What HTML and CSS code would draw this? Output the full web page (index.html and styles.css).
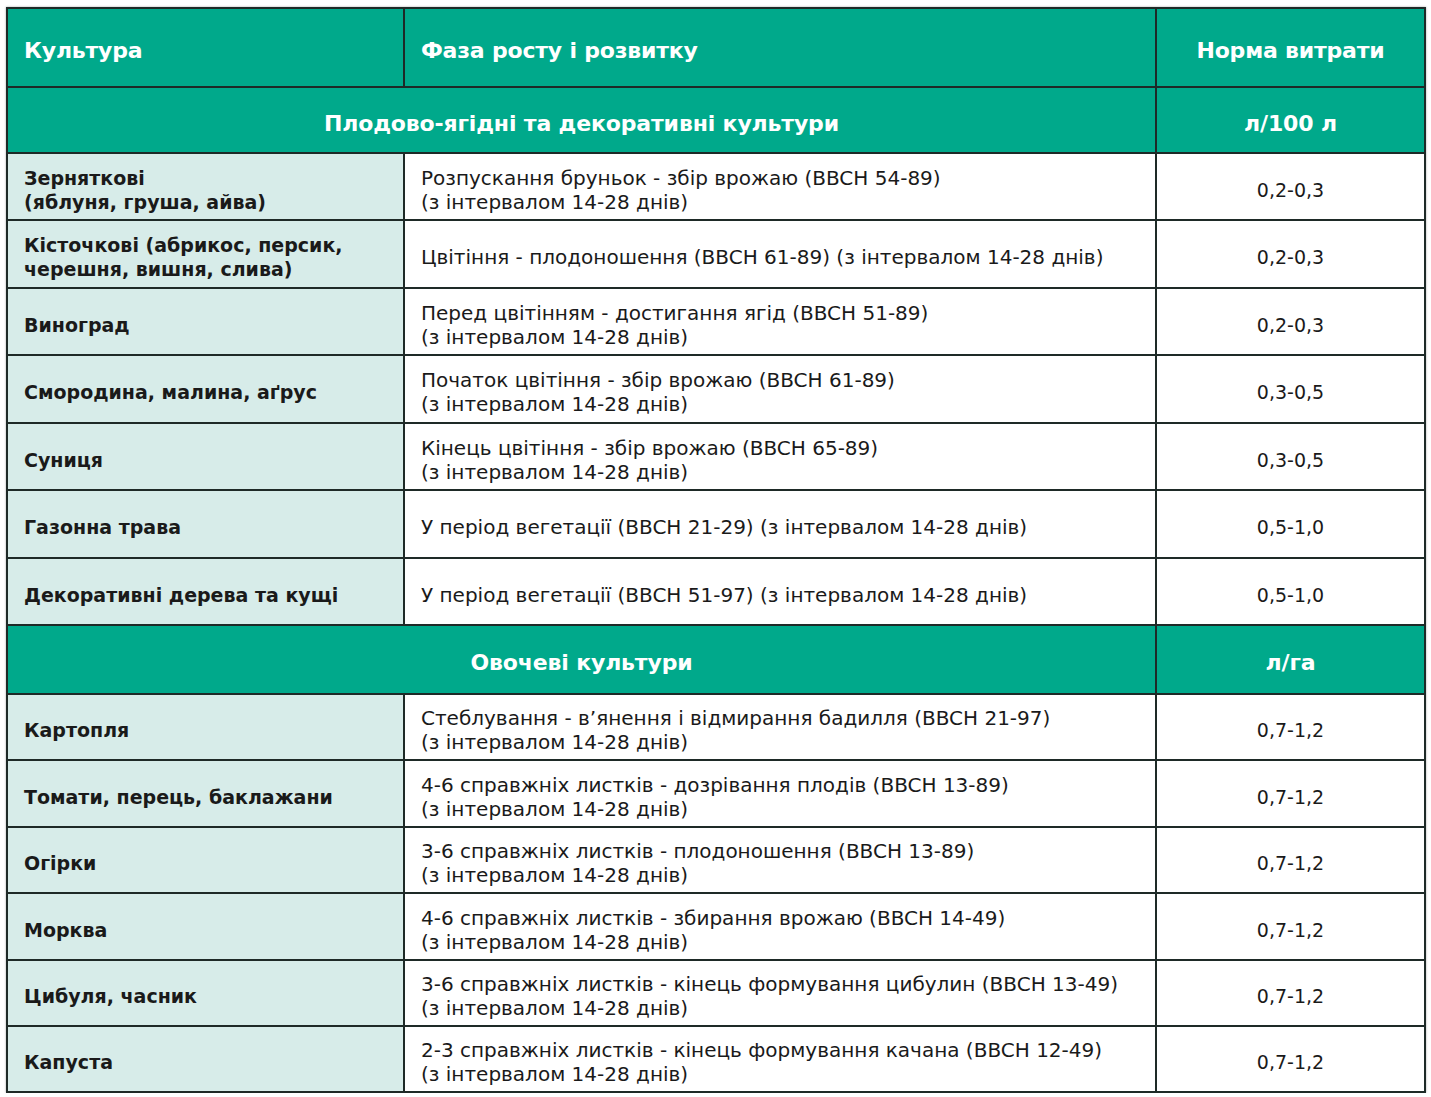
FILE: index.html
```html
<!DOCTYPE html>
<html lang="uk">
<head>
<meta charset="utf-8">
<title>Норма витрати</title>
<link rel="stylesheet" href="styles.css">
</head>
<body>
<table class="rates">
  <colgroup>
    <col class="c-crop">
    <col class="c-phase">
    <col class="c-rate">
  </colgroup>
  <thead>
    <tr class="head">
      <th class="left">Культура</th>
      <th class="left">Фаза росту і розвитку</th>
      <th>Норма витрати</th>
    </tr>
  </thead>
  <tbody>
    <tr class="section">
      <th colspan="2">Плодово-ягідні та декоративні культури</th>
      <th>л/100 л</th>
    </tr>
    <tr class="r67">
      <td class="crop">Зерняткові<br>(яблуня, груша, айва)</td>
      <td class="phase">Розпускання бруньок - збір врожаю (BBCH 54-89)<br>(з інтервалом 14-28 днів)</td>
      <td class="rate">0,2-0,3</td>
    </tr>
    <tr class="r68">
      <td class="crop">Кісточкові (абрикос, персик,<br>черешня, вишня, слива)</td>
      <td class="phase">Цвітіння - плодоношення (BBCH 61-89) (з інтервалом 14-28 днів)</td>
      <td class="rate">0,2-0,3</td>
    </tr>
    <tr class="r67">
      <td class="crop">Виноград</td>
      <td class="phase">Перед цвітінням - достигання ягід (BBCH 51-89)<br>(з інтервалом 14-28 днів)</td>
      <td class="rate">0,2-0,3</td>
    </tr>
    <tr class="r68">
      <td class="crop">Смородина, малина, аґрус</td>
      <td class="phase">Початок цвітіння - збір врожаю (BBCH 61-89)<br>(з інтервалом 14-28 днів)</td>
      <td class="rate">0,3-0,5</td>
    </tr>
    <tr class="r67">
      <td class="crop">Суниця</td>
      <td class="phase">Кінець цвітіння - збір врожаю (BBCH 65-89)<br>(з інтервалом 14-28 днів)</td>
      <td class="rate">0,3-0,5</td>
    </tr>
    <tr class="r68">
      <td class="crop">Газонна трава</td>
      <td class="phase">У період вегетації (BBCH 21-29) (з інтервалом 14-28 днів)</td>
      <td class="rate">0,5-1,0</td>
    </tr>
    <tr class="r67">
      <td class="crop">Декоративні дерева та кущі</td>
      <td class="phase">У період вегетації (BBCH 51-97) (з інтервалом 14-28 днів)</td>
      <td class="rate">0,5-1,0</td>
    </tr>
    <tr class="section section2">
      <th colspan="2">Овочеві культури</th>
      <th>л/га</th>
    </tr>
    <tr class="r66">
      <td class="crop">Картопля</td>
      <td class="phase">Стеблування - в’янення і відмирання бадилля (BBCH 21-97)<br>(з інтервалом 14-28 днів)</td>
      <td class="rate">0,7-1,2</td>
    </tr>
    <tr class="r67">
      <td class="crop">Томати, перець, баклажани</td>
      <td class="phase">4-6 справжніх листків - дозрівання плодів (BBCH 13-89)<br>(з інтервалом 14-28 днів)</td>
      <td class="rate">0,7-1,2</td>
    </tr>
    <tr class="r66">
      <td class="crop">Огірки</td>
      <td class="phase">3-6 справжніх листків - плодоношення (BBCH 13-89)<br>(з інтервалом 14-28 днів)</td>
      <td class="rate">0,7-1,2</td>
    </tr>
    <tr class="r67">
      <td class="crop">Морква</td>
      <td class="phase">4-6 справжніх листків - збирання врожаю (BBCH 14-49)<br>(з інтервалом 14-28 днів)</td>
      <td class="rate">0,7-1,2</td>
    </tr>
    <tr class="r66">
      <td class="crop">Цибуля, часник</td>
      <td class="phase">3-6 справжніх листків - кінець формування цибулин (BBCH 13-49)<br>(з інтервалом 14-28 днів)</td>
      <td class="rate">0,7-1,2</td>
    </tr>
    <tr class="r66">
      <td class="crop">Капуста</td>
      <td class="phase">2-3 справжніх листків - кінець формування качана (BBCH 12-49)<br>(з інтервалом 14-28 днів)</td>
      <td class="rate">0,7-1,2</td>
    </tr>
  </tbody>
</table>
</body>
</html>
```
FILE: styles.css
```css
html, body {
  margin: 0;
  padding: 0;
  background: #ffffff;
}

body {
  padding: 7px 7px 0 6px;
  font-family: "DejaVu Sans", "Noto Sans", sans-serif;
  color: #1a1a1a;
}

.rates {
  border-collapse: collapse;
  table-layout: fixed;
  width: 1418px;
  box-shadow: 0 0 2px rgba(0, 0, 0, 0.35);
}

.c-crop { width: 397px; }
.c-phase { width: 752px; }
.c-rate { width: 269px; }

.rates th,
.rates td {
  border: 2px solid #1e2a27;
  padding: 6px 16px 0 16px;
  vertical-align: middle;
}

.head { height: 79px; }
.section { height: 66px; }
.section2 { height: 69px; }
.r66 { height: 66px; }
.r67 { height: 67px; }
.r68 { height: 68px; }

.head th {
  background: #00a98b;
  color: #ffffff;
  font-size: 22px;
  font-weight: bold;
  text-align: center;
  letter-spacing: -0.2px;
}

.head th.left {
  text-align: left;
}

.section th {
  background: #00a98b;
  color: #ffffff;
  font-size: 22px;
  font-weight: bold;
  text-align: center;
  letter-spacing: -0.15px;
}

.crop {
  background: #d7ece9;
  font-weight: bold;
  font-size: 19px;
  line-height: 24px;
}

.phase {
  font-size: 20px;
  line-height: 24px;
  letter-spacing: 0;
}

.rate {
  font-size: 19px;
  text-align: center;
}
```
